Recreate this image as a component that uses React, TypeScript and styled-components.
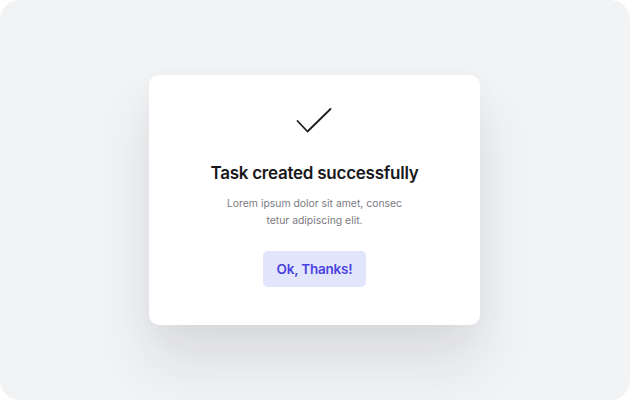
import styled, { createGlobalStyle } from "styled-components";

const GlobalStyle = createGlobalStyle`
  body {
    margin: 0;
    background: #ffffff;
    font-family: "Inter", "Noto Sans", sans-serif;
  }
`;

export default function App() {
  return (
    <>
      <GlobalStyle />
      <Frame>
        <Card>
          <CheckIcon width="36" height="30" viewBox="0 0 36 30" fill="none">
            <path
              d="M1.5 15L11.5 25.5L34.5 3"
              stroke="#1c1c1e"
              strokeWidth="1.8"
              strokeLinecap="round"
              strokeLinejoin="round"
            />
          </CheckIcon>
          <Title>Task created successfully</Title>
          <Description>
            Lorem ipsum dolor sit amet, consec
            <br />
            tetur adipiscing elit.
          </Description>
          <ConfirmButton type="button">Ok, Thanks!</ConfirmButton>
        </Card>
      </Frame>
    </>
  );
}

const Frame = styled.div`
  width: 630px;
  height: 400px;
  border-radius: 20px;
  background: #f2f3f5;
  display: flex;
  align-items: center;
  justify-content: center;
  overflow: hidden;
`;

const Card = styled.div`
  box-sizing: border-box;
  width: 331px;
  height: 250px;
  margin-left: -1px;
  padding-top: 31px;
  background: #ffffff;
  border-radius: 10px;
  box-shadow: 0 38px 56px rgba(30, 32, 45, 0.1), 0 10px 30px rgba(30, 32, 45, 0.03);
  display: flex;
  flex-direction: column;
  align-items: center;
`;

const CheckIcon = styled.svg`
  display: block;
  margin-left: -1px;
`;

const Title = styled.h2`
  margin: 25px 0 0;
  font-size: 17px;
  line-height: 24px;
  font-weight: 600;
  letter-spacing: -0.25px;
  color: #18181b;
`;

const Description = styled.p`
  margin: 10px 0 0;
  font-size: 10.4px;
  line-height: 17px;
  color: #7a7a82;
  text-align: center;
`;

const ConfirmButton = styled.button`
  margin-top: 22px;
  width: 103px;
  height: 36px;
  border: none;
  border-radius: 5px;
  background: #e1e6fd;
  color: #4a3fe0;
  font-family: "Inter", "Noto Sans", sans-serif;
  font-size: 13.5px;
  font-weight: 600;
  letter-spacing: -0.2px;
  cursor: pointer;
`;
